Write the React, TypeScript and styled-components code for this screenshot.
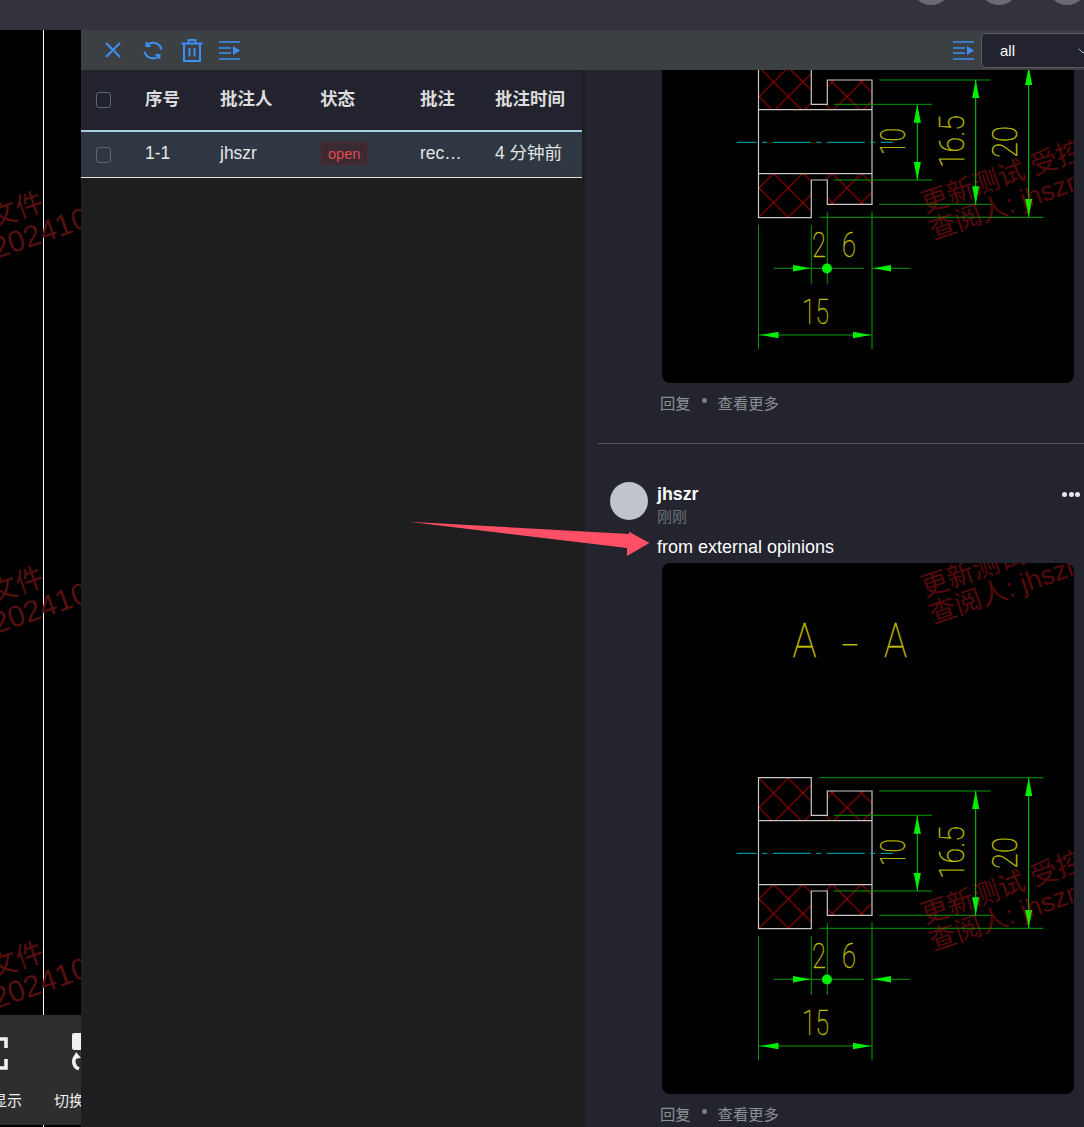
import React from "react";
import styled, { createGlobalStyle } from "styled-components";
import { ChevronDown } from "lucide-react";

const Global = createGlobalStyle`
  html, body { margin: 0; padding: 0; background: #23242e; }
  body { font-family: "Liberation Sans", "Noto Sans CJK SC", sans-serif; }
  * { box-sizing: border-box; }
`;

const Page = styled.div`
  position: relative;
  width: 1084px;
  height: 1127px;
  overflow: hidden;
  display: flex;
  flex-direction: column;
  background: #23242e;
`;
const TopBar = styled.header`
  height: 30px;
  flex: none;
  background: #32333d;
  display: flex;
  justify-content: flex-end;
  overflow: hidden;
`;
const TopCircles = styled.div`
  display: flex;
  gap: 28px;
  margin-right: -3px;
`;
const TopCircle = styled.span`
  width: 40px;
  height: 40px;
  margin-top: -35px;
  border-radius: 50%;
  background: #696a74;
`;
const Body = styled.div`
  flex: 1;
  min-height: 0;
  display: flex;
`;
const Canvas = styled.section`
  position: relative;
  width: 81px;
  flex: none;
  background: #000;
  overflow: hidden;
`;
const CanvasArt = styled.svg`
  display: block;
  width: 81px;
  height: 1097px;
`;
const ViewerTools = styled.div`
  position: absolute;
  left: 0;
  right: 0;
  top: 985px;
  height: 110px;
  background: #2e2e2e;
  overflow: hidden;
`;
const ToolsRail = styled.div`
  display: flex;
  gap: 16px;
  margin-left: -46px;
  width: 200px;
`;
const ViewerTool = styled.div`
  width: 76px;
  flex: none;
  display: flex;
  flex-direction: column;
  align-items: center;
  padding-top: 18px;
  color: #f0f0f0;
  font-size: 15px;
  line-height: 20px;
  white-space: nowrap;
  svg { display: block; margin-bottom: 21px; }
`;
const Panel = styled.main`
  flex: 1;
  min-width: 0;
  display: flex;
  flex-direction: column;
`;
const Toolbar = styled.div`
  height: 40px;
  flex: none;
  background: #3c4043;
  display: flex;
  align-items: center;
  justify-content: space-between;
  padding-left: 24px;
  position: relative;
  z-index: 2;
`;
const ToolGroup = styled.div`
  display: flex;
  align-items: center;
  gap: 18px;
  svg { display: block; fill: none; stroke: #3b8ff5; }
  svg:first-child { margin-right: 4px; }
  svg:last-child { margin-left: -2px; }
`;
const FilterGroup = styled.div`
  display: flex;
  align-items: center;
  gap: 7px;
  margin-right: -14px;
  svg.menu { display: block; fill: none; stroke: #3b8ff5; }
`;
const Select = styled.div`
  width: 117px;
  height: 35px;
  border: 1.5px solid #5b5d63;
  border-radius: 5px;
  background: #22232e;
  color: #fff;
  font-size: 15px;
  display: flex;
  align-items: center;
  justify-content: space-between;
  padding: 1px 6px 0 18px;
  svg { color: #a9c4e8; }
`;
const Content = styled.div`
  flex: 1;
  min-height: 0;
  display: flex;
`;
const TablePane = styled.section`
  width: 504px;
  flex: none;
  background: #1e1e20;
  padding-right: 3px;
`;
const Row = styled.div<{ $head?: boolean }>`
  display: grid;
  grid-template-columns: 49px 75px 100px 100px 75px 1fr;
  align-items: center;
  padding-left: 15px;
  height: ${(p) => (p.$head ? "60px" : "48px")};
  background: ${(p) => (p.$head ? "#22232e" : "#2e3742")};
  color: ${(p) => (p.$head ? "#dcdcdc" : "#e4e6e8")};
  font-size: 17.5px;
  font-weight: ${(p) => (p.$head ? 700 : 400)};
  border-top: ${(p) => (p.$head ? "none" : "2px solid #a5cfe6")};
  border-bottom: ${(p) => (p.$head ? "none" : "1.5px solid #e6e2cc")};
  white-space: nowrap;
`;
const Cell = styled.span<{ $lift?: number }>`
  padding-bottom: ${(p) => p.$lift ?? 3}px;
`;
const Check = styled.span`
  width: 15px;
  height: 16px;
  border: 1.5px solid #5e6670;
  border-radius: 3px;
`;
const Badge = styled.span`
  justify-self: start;
  height: 23px;
  padding: 0 7px;
  margin-bottom: 2px;
  display: flex;
  align-items: center;
  border-radius: 4px;
  border: 1px solid #55272e;
  background: #3a2a32;
  color: #e8474f;
  font-size: 14.6px;
`;
const CommentsPane = styled.section`
  flex: 1;
  min-width: 0;
  overflow: hidden;
  background: #23242e;
  padding-left: 13px;
`;
const CommentList = styled.div`
  margin-top: -218px;
`;
const Comment = styled.article<{ $divided?: boolean }>`
  padding: 0 0 0 12px;
  border-bottom: ${(p) => (p.$divided ? "1px solid #55565e" : "none")};
  margin-bottom: ${(p) => (p.$divided ? "38px" : "0")};
  padding-bottom: ${(p) => (p.$divided ? "32px" : "0")};
`;
const Head = styled.div`
  display: flex;
  gap: 9px;
`;
const Avatar = styled.span`
  width: 38px;
  height: 38px;
  border-radius: 50%;
  background: #c0c4cc;
  flex: none;
`;
const Who = styled.div`
  flex: 1;
  display: flex;
  flex-direction: column;
`;
const NameRow = styled.div`
  display: flex;
  justify-content: space-between;
  align-items: center;
  height: 24px;
`;
const Name = styled.span`
  color: #fff;
  font-weight: 700;
  font-size: 17.8px;
`;
const More = styled.span`
  width: 18px;
  margin-right: 4px;
  display: flex;
  justify-content: space-between;
`;
const MoreDot = styled.i`
  width: 5px;
  height: 5px;
  border-radius: 50%;
  background: #e8e8ea;
`;
const Time = styled.span`
  color: #6c6f78;
  font-size: 15px;
  line-height: 20px;
  margin-top: 1px;
`;
const Body2 = styled.p`
  margin: 10px 0 5px 47px;
  color: #fff;
  font-size: 18px;
  line-height: 21px;
`;
const Sheet = styled.div`
  margin-left: 52px;
  width: 412px;
  height: 531px;
  background: #000;
  border-radius: 8px;
  overflow: hidden;
  svg { display: block; }
`;
const Actions = styled.div`
  margin: 10px 0 0 50px;
  display: flex;
  align-items: center;
  gap: 10px;
  height: 18px;
  color: #8b9098;
  font-size: 15.3px;
`;
const Dot = styled.span`
  width: 5px;
  height: 5px;
  border-radius: 50%;
  background: #76808e;
  margin: -3px 1px 0;
`;
const Annotation = styled.svg`
  position: absolute;
  left: 400px;
  top: 510px;
`;

const X = () => (
  <svg width="16" height="16" viewBox="0 0 16 16" strokeWidth="2">
    <path d="M1 1 15 15M15 1 1 15" />
  </svg>
);
const Sync = () => (
  <svg width="20" height="21" viewBox="0 0 20 21" strokeWidth="2">
    <path d="M3.5 6A8.5 8.5 0 0 1 18.5 9.5M3.5 2V6H7.5M16.5 15A8.5 8.5 0 0 1 1.5 11.5M16.5 19V15H12.5" />
  </svg>
);
const Trash = () => (
  <svg width="22" height="23" viewBox="0 0 22 23" strokeWidth="2">
    <path d="M7.5 4V1H14.5V4M.5 4.5H21.5M3 4.5V22H19V4.5M8.5 9V17.5M13.5 9V17.5" />
  </svg>
);
const Outdent = ({ className }: { className?: string }) => (
  <svg className={className} width="21" height="19" viewBox="0 0 21 19" strokeWidth="1.7">
    <path d="M0 1H21M0 7H12M0 12H12M0 18H21" />
    <path d="M14 5 21 9.5 14 14Z" fill="#3b8ff5" stroke="none" />
  </svg>
);

const FS = "'Roboto', 'Liberation Sans', sans-serif";
const YEL = "#bcbc00";

const arrowV = (x: number, y: number, dir: 1 | -1) =>
  `${x},${y} ${x - 3.6},${y + dir * 18} ${x + 3.6},${y + dir * 18}`;
const arrowH = (x: number, y: number, dir: 1 | -1) =>
  `${x},${y} ${x + dir * 18},${y - 3.3} ${x + dir * 18},${y + 3.3}`;

const CadText = ({ x, y, w, size, rot, children }: { x: number; y: number; w: number; size: number; rot?: boolean; children: string }) => (
  <text
    x={x}
    y={y}
    fontFamily={FS}
    fontWeight={100}
    fontSize={size}
    fill={YEL}
    stroke={YEL}
    strokeWidth={0.4}
    textLength={w}
    lengthAdjust="spacingAndGlyphs"
    transform={rot ? `rotate(-90 ${x} ${y})` : undefined}
  >
    {children}
  </text>
);

const Mark = ({ x, y, t1, t2 }: { x: number; y: number; t1: string; t2: string }) => (
  <g fill="#ff2020" opacity="0.33" fontFamily="'Liberation Sans','Noto Sans CJK SC',sans-serif" fontSize={27}>
    <text x={x + 3} y={y} transform={`rotate(-19 ${x + 3} ${y})`}>{t1}</text>
    <text x={x + 11} y={y + 27} transform={`rotate(-19 ${x + 11} ${y + 27})`}>{t2}</text>
  </g>
);

const Drawing = ({ id }: { id: string }) => (
  <svg width="412" height="531" viewBox="662 563 412 531">
    <defs>
      <pattern id={id + "a"} patternUnits="userSpaceOnUse" x="788.3" y="778.3" width="29.3" height="29.3">
        <path d="M0 0 29.3 29.3M29.3 0 0 29.3" stroke="#a80000" strokeWidth="1" fill="none" />
      </pattern>
      <pattern id={id + "b"} patternUnits="userSpaceOnUse" x="788.3" y="899" width="29.3" height="29.3">
        <path d="M0 0 29.3 29.3M29.3 0 0 29.3" stroke="#a80000" strokeWidth="1" fill="none" />
      </pattern>
    </defs>

    <path d="M758.5 777.7H811.3V815.3H827.3V791H872V820.7H758.5Z" fill={`url(#${id}a)`} />
    <path d="M758.5 928.7H811.3V891H827.3V915.3H872V884.7H758.5Z" fill={`url(#${id}b)`} />

    <g fill="none" stroke="#c8c8c8" strokeWidth="1.2">
      <path d="M758.5 777.7H811.3V815.3H827.3V791H872V915.3H827.3V891H811.3V928.7H758.5Z" />
      <path d="M758.5 820.7H872M758.5 884.7H872" />
    </g>

    <path d="M736.7 853.3H893" stroke="#00b4b4" strokeWidth="1" strokeDasharray="38 5.5 5 5.5" strokeDashoffset="18" />

    <g stroke="#009c00" strokeWidth="1" fill="none">
      <path d="M819.3 777.7H1043.3M819.3 928.3H1043.3M879.3 791H990.7M879.3 915.3H990.7M834 815.3H932M834 891H932" />
      <path d="M758.5 936V1060M872 922.3V1060M811.3 936V994.7M827.3 923.3V994.7" />
      <path d="M774 979.3H864M872 979.3H910M758.5 1046H872" />
    </g>
    <g stroke="#00d800" strokeWidth="1" fill="none">
      <path d="M917.3 815.7V891M975.7 791V915.3M1028.7 777.7V928.3" />
    </g>
    <g fill="#00f000">
      <polygon points={arrowV(917.3, 815.7, 1)} />
      <polygon points={arrowV(917.3, 891, -1)} />
      <polygon points={arrowV(975.7, 791, 1)} />
      <polygon points={arrowV(975.7, 915.3, -1)} />
      <polygon points={arrowV(1028.7, 778, 1)} />
      <polygon points={arrowV(1028.7, 928, -1)} />
      <polygon points={arrowH(811, 979.3, -1)} />
      <polygon points={arrowH(873, 979.3, 1)} />
      <polygon points={arrowH(760.5, 1046, 1)} />
      <polygon points={arrowH(871, 1046, -1)} />
      <circle cx="827" cy="979.5" r="5" />
    </g>

    <CadText x={792.5} y={656.5} w={24} size={48}>A</CadText>
    <path d="M842.7 644.7H857.3" stroke={YEL} strokeWidth="1.4" />
    <CadText x={884} y={656.5} w={23} size={48}>A</CadText>
    <CadText x={812} y={968} w={14} size={35}>2</CadText>
    <CadText x={842} y={968} w={14} size={35}>6</CadText>
    <CadText x={802} y={1034.7} w={27} size={35}>15</CadText>
    <CadText x={905} y={866} w={27} size={35} rot>10</CadText>
    <CadText x={964} y={879} w={53} size={35} rot>16.5</CadText>
    <CadText x={1017} y={869} w={32} size={35} rot>20</CadText>

    <Mark x={922} y={597} t1="更新测试 受控" t2="查阅人: jhszr" />
    <Mark x={922} y={924} t1="更新测试 受控" t2="查阅人: jhszr" />
  </svg>
);

const CanvasMark = ({ dy }: { dy: number }) => (
  <g fill="#561010" fontFamily="'Liberation Sans','Noto Sans CJK SC',sans-serif">
    <text x={46} y={960 + dy} fontSize={28} textAnchor="end" transform={`rotate(-19 46 ${960 + dy})`}>文件</text>
    <text x={-4} y={1009 + dy} fontSize={30} transform={`rotate(-19 -4 ${1009 + dy})`}>202410</text>
  </g>
);

export default function App() {
  return (
    <Page>
      <Global />
      <TopBar>
        <TopCircles>
          <TopCircle />
          <TopCircle />
          <TopCircle />
        </TopCircles>
      </TopBar>
      <Body>
        <Canvas>
          <CanvasArt viewBox="0 30 81 1097">
            <path d="M43.5 30V1127" stroke="#fff" strokeWidth="1" />
            <CanvasMark dy={-750} />
            <CanvasMark dy={-375} />
            <CanvasMark dy={0} />
          </CanvasArt>
          <ViewerTools>
            <ToolsRail>
              <ViewerTool>
                <svg width="32" height="37" viewBox="0 0 32 37" fill="none" stroke="#f2f2f2" strokeWidth="3.6">
                  <path d="M2 15V6H11M21 6H30V15M30 26V35H21M11 35H2V26" />
                </svg>
                全屏显示
              </ViewerTool>
              <ViewerTool>
                <svg width="24" height="37" viewBox="0 0 24 37" fill="none">
                  <rect x="0" y="0" width="24" height="17" rx="2" fill="#f0f1f3" />
                  <path d="M7 36A8 8 0 0 1 4 23" stroke="#f0f1f3" strokeWidth="3.5" />
                  <path d="M4 19 9 25 1 26Z" fill="#f0f1f3" />
                </svg>
                切换视图
              </ViewerTool>
            </ToolsRail>
          </ViewerTools>
        </Canvas>
        <Panel>
          <Toolbar>
            <ToolGroup>
              <X />
              <Sync />
              <Trash />
              <Outdent />
            </ToolGroup>
            <FilterGroup>
              <Outdent className="menu" />
              <Select>
                all
                <ChevronDown size={16} strokeWidth={1.5} />
              </Select>
            </FilterGroup>
          </Toolbar>
          <Content>
            <TablePane>
              <Row $head>
                <Check />
                <Cell $lift={5}>序号</Cell>
                <Cell $lift={5}>批注人</Cell>
                <Cell $lift={5}>状态</Cell>
                <Cell $lift={5}>批注</Cell>
                <Cell $lift={5}>批注时间</Cell>
              </Row>
              <Row>
                <Check />
                <Cell>1-1</Cell>
                <Cell>jhszr</Cell>
                <Badge>open</Badge>
                <Cell>rec…</Cell>
                <Cell $lift={6}>4 分钟前</Cell>
              </Row>
            </TablePane>
            <CommentsPane>
              <CommentList>
                <Comment $divided>
                  <Sheet>
                    <Drawing id="first" />
                  </Sheet>
                  <Actions>
                    <span>回复</span>
                    <Dot />
                    <span>查看更多</span>
                  </Actions>
                </Comment>
                <Comment>
                  <Head>
                    <Avatar />
                    <Who>
                      <NameRow>
                        <Name>jhszr</Name>
                        <More>
                          <MoreDot />
                          <MoreDot />
                          <MoreDot />
                        </More>
                      </NameRow>
                      <Time>刚刚</Time>
                    </Who>
                  </Head>
                  <Body2>from external opinions</Body2>
                  <Sheet>
                    <Drawing id="second" />
                  </Sheet>
                  <Actions>
                    <span>回复</span>
                    <Dot />
                    <span>查看更多</span>
                  </Actions>
                </Comment>
              </CommentList>
            </CommentsPane>
          </Content>
        </Panel>
      </Body>
      <Annotation width="260" height="50" viewBox="400 510 260 50">
        <path d="M408.7 521.7 629 534V531.7L649.5 543 627 556V548Z" fill="#ff4f64" />
      </Annotation>
    </Page>
  );
}
